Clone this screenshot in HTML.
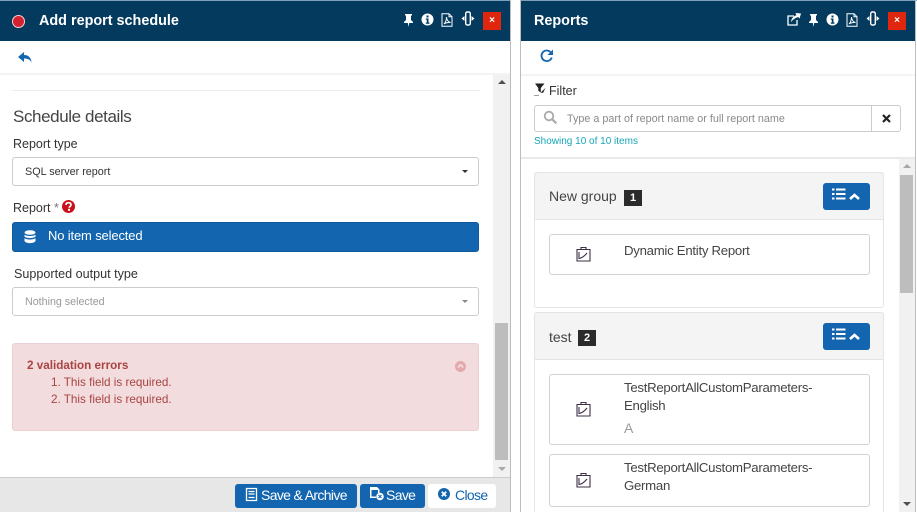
<!DOCTYPE html>
<html><head><meta charset="utf-8">
<style>
html,body{margin:0;padding:0;background:#fff;width:917px;height:512px;overflow:hidden}
#w{position:absolute;left:0;top:0;width:917px;height:512px;overflow:hidden;font-family:"Liberation Sans",sans-serif;color:#333}
.a{position:absolute;box-sizing:border-box;white-space:nowrap}
svg{position:absolute;overflow:visible}
.hd{background:#033a5e;height:40px;top:1px}
.t{font-weight:bold;color:#fff;font-size:14.4px;line-height:20px;top:11px}
.x{background:#e0260c;width:18px;height:18px;top:12px;color:#fff;font-size:10px;font-weight:bold;text-align:center;line-height:17px}
.btn{background:#1265ae;color:#fff;border-radius:3px;height:24px;top:484px;font-size:14px;line-height:22px;letter-spacing:-.65px}
.card{border:1px solid #d2d2d2;border-radius:3px;left:549px;width:321px;background:#fff}
.panel{left:534px;width:350px;border:1px solid #e4e4e4;border-radius:3px;background:#fff}
.ph{left:534px;width:350px;height:47px;background:#f4f4f4;border:1px solid #e4e4e4;border-radius:3px 3px 0 0}
.gb{left:823px;width:47px;height:27px;background:#1265ae;border-radius:3px}
.num{background:#2b2b2b;color:#fff;font-size:11px;font-weight:bold;width:18px;height:16px;line-height:16px;text-align:center}
.rt{font-size:13.2px;letter-spacing:-.27px;line-height:18px;left:624px;color:#444}
</style></head><body><div id="w">
<div class="a" style="left:0;top:0;width:511px;height:1px;background:#7da0b8"></div>
<div class="a" style="left:521px;top:0;width:396px;height:1px;background:#7da0b8"></div>
<div class="a hd" style="left:0;width:510px"></div>
<div class="a hd" style="left:521px;width:394px"></div>
<div class="a" style="left:510px;top:0;width:1px;height:512px;background:#bdbdbd"></div>
<div class="a" style="left:520px;top:0;width:1px;height:512px;background:#bdbdbd"></div>
<div class="a" style="left:915px;top:0;width:1px;height:512px;background:#bdbdbd"></div>

<div class="a" style="left:13px;top:15.5px;width:11px;height:11px;border-radius:50%;background:#d4212f;box-shadow:0 0 0 1px #f4d5d8"></div>
<div class="a t" style="left:39px">Add report schedule</div>

<svg style="left:403px;top:14px" width="11" height="13" viewBox="0 0 11 13"><path d="M2 0h7v1.500H8V6l2 2v1H6.200L5.500 13 4.800 9H1V8l2-2V1.500H2z" fill="#fff"/></svg>
<svg style="left:421px;top:13px" width="13" height="13" viewBox="0 0 13 13"><circle cx="6.500" cy="6.500" r="6" fill="#fff"/><path d="M5.500 2.500h2v2h-2zM4.800 5.500h2.700v4h1v1.200H4.800V9.500h1V6.700h-1z" fill="#033a5e"/></svg>
<svg style="left:441px;top:13px" width="12" height="14" viewBox="0 0 12 14"><path d="M1 .7h7l3 3v9.600H1zM8 .7v3h3M3 11c2-2 2.500-5 2.500-7 .3 3 2 5 4 5.500-2.500-.2-5 .3-6.500 1.500z" fill="none" stroke="#fff" stroke-width="1"/></svg>
<svg style="left:461px;top:11px" width="14" height="15" viewBox="0 0 14 15"><rect x="4.700" y="1" width="4.600" height="13" rx="1.500" fill="none" stroke="#fff" stroke-width="1.400"/><path d="M3.500 5v5L.5 7.500zM10.500 5v5l3-2.500z" fill="#fff"/></svg>
<div class="a x" style="left:483px">×</div>

<div class="a t" style="left:534px">Reports</div>
<svg style="left:787px;top:12px" width="14" height="14" viewBox="0 0 14 14"><path d="M7 4H1v9h9V8" fill="none" stroke="#fff" stroke-width="1.300"/><path d="M4 10c.3-3 2-6 5.500-6.800L8.500 1 14 1.500 12.500 6.500 11 5C8 6 6 7.500 4 10z" fill="#fff"/></svg>
<svg style="left:808px;top:14px" width="11" height="13" viewBox="0 0 11 13"><path d="M2 0h7v1.500H8V6l2 2v1H6.200L5.500 13 4.800 9H1V8l2-2V1.500H2z" fill="#fff"/></svg>
<svg style="left:826px;top:13px" width="13" height="13" viewBox="0 0 13 13"><circle cx="6.500" cy="6.500" r="6" fill="#fff"/><path d="M5.500 2.500h2v2h-2zM4.800 5.500h2.700v4h1v1.200H4.800V9.500h1V6.700h-1z" fill="#033a5e"/></svg>
<svg style="left:846px;top:13px" width="12" height="14" viewBox="0 0 12 14"><path d="M1 .7h7l3 3v9.600H1zM8 .7v3h3M3 11c2-2 2.500-5 2.500-7 .3 3 2 5 4 5.500-2.500-.2-5 .3-6.500 1.500z" fill="none" stroke="#fff" stroke-width="1"/></svg>
<svg style="left:866px;top:11px" width="14" height="15" viewBox="0 0 14 15"><rect x="4.700" y="1" width="4.600" height="13" rx="1.500" fill="none" stroke="#fff" stroke-width="1.400"/><path d="M3.500 5v5L.5 7.500zM10.500 5v5l3-2.500z" fill="#fff"/></svg>
<div class="a x" style="left:888px">×</div>

<!-- left toolbar -->
<div class="a" style="left:0;top:73px;width:510px;height:2px;background:#f4f4f4"></div>
<svg style="left:18px;top:52px" width="14" height="11" viewBox="0 0 14 11"><path d="M6 0v3c4 0 7 2 7.500 7.500C12 7.500 10 6.500 6 6.500V10L0 5z" fill="#1265ae"/></svg>
<div class="a" style="left:12px;top:90px;width:468px;height:1px;background:#ececec"></div>
<div class="a" style="left:13px;top:106px;font-size:17px;letter-spacing:-.4px;line-height:22px;color:#444">Schedule details</div>
<div class="a" style="left:13px;top:135px;font-size:12.5px;line-height:18px;color:#333">Report type</div>
<div class="a" style="left:12px;top:157px;width:467px;height:29px;border:1px solid #ccc;border-radius:3px;font-size:10.8px;line-height:28px;padding-left:12px;color:#333">SQL server report</div>
<div class="a" style="left:462px;top:170px;border:3.500px solid transparent;border-top:3.500px solid #333;border-bottom:0"></div>
<div class="a" style="left:13px;top:199px;font-size:12.5px;line-height:18px;color:#333">Report <span style="color:#777">*</span></div>
<svg style="left:62px;top:200px" width="13" height="13" viewBox="0 0 13 13"><circle cx="6.500" cy="6.500" r="6.500" fill="#c8101a"/><path d="M4 5c0-1.500 1-2.300 2.500-2.300S9 3.500 9 4.800C9 6.300 7.200 6.300 7.200 7.800" fill="none" stroke="#fff" stroke-width="1.700"/><rect x="6" y="8.800" width="2" height="2" fill="#fff"/></svg>
<div class="a" style="left:12px;top:222px;width:467px;height:30px;background:#1265ae;border:1px solid #0f5a9c;border-radius:3px;color:#fff;font-size:13px;letter-spacing:-.15px;line-height:26px;padding-left:35px">No item selected</div>
<svg style="left:24px;top:230px" width="12" height="14" viewBox="0 0 12 14"><ellipse cx="6" cy="2.500" rx="5.500" ry="2.300" fill="#fff"/><path d="M.5 4.500C1.500 6.500 10.500 6.500 11.500 4.500V6.500C10.500 8.500 1.500 8.500.5 6.500zM.5 8C1.500 10 10.500 10 11.500 8V11C10.500 13.800 1.500 13.800.5 11z" fill="#fff"/></svg>
<div class="a" style="left:14px;top:265px;font-size:12.6px;line-height:18px;color:#333">Supported output type</div>
<div class="a" style="left:12px;top:287px;width:467px;height:29px;border:1px solid #ccc;border-radius:3px;font-size:10.7px;line-height:28px;padding-left:12px;color:#999">Nothing selected</div>
<div class="a" style="left:462px;top:300px;border:3.500px solid transparent;border-top:3.500px solid #888;border-bottom:0"></div>

<div class="a" style="left:12px;top:343px;width:467px;height:88px;background:#f2dcde;border:1px solid #ebd0d3;border-radius:3px"></div>
<div class="a" style="left:27px;top:358px;font-size:11.7px;line-height:16px;font-weight:bold;color:#a94442">2 validation errors</div>
<div class="a" style="left:51px;top:374px;font-size:11.7px;line-height:17px;color:#a94442">1. This field is required.<br>2. This field is required.</div>
<svg style="left:455px;top:361px" width="11" height="11" viewBox="0 0 11 11"><circle cx="5.500" cy="5.500" r="5.500" fill="#e5a8ad"/><path d="M2.800 6.500 5.500 3.800 8.200 6.500" fill="none" stroke="#f2dcde" stroke-width="1.600"/></svg>

<!-- left scrollbar -->
<div class="a" style="left:493px;top:75px;width:17px;height:402px;background:#f1f1f1"></div>
<div class="a" style="left:495px;top:323px;width:13px;height:137px;background:#bdbdbd"></div>
<div class="a" style="left:498px;top:80px;border:4px solid transparent;border-bottom:4px solid #505050;border-top:0"></div>
<div class="a" style="left:498px;top:467px;border:4px solid transparent;border-top:4px solid #a8a8a8;border-bottom:0"></div>

<!-- footer -->
<div class="a" style="left:0;top:477px;width:510px;height:35px;background:#e7e7e7;border-top:1px solid #ccc"></div>
<div class="a btn" style="left:235px;width:122px;padding-left:26px">Save &amp; Archive</div>
<svg style="left:245px;top:487px" width="13" height="15" viewBox="0 0 13 15"><path d="M1.500 1.500h10v12h-10zM3.500 4.500h6M3.500 7h6M3.500 10.500h6" fill="none" stroke="#fff" stroke-width="1.300"/></svg>
<div class="a btn" style="left:360px;width:65px;padding-left:26px">Save</div>
<svg style="left:369px;top:486px" width="15" height="15" viewBox="0 0 15 15"><path d="M1 1h7l2.500 2.500V7H9V4H2.500v6.500H7V12H1z" fill="#fff"/><rect x="4" y="1" width="3" height="3" fill="#fff"/><circle cx="11" cy="10.500" r="3.800" fill="#fff"/><path d="M9.500 9l3 3M12.500 9l-3 3" stroke="#1265ae" stroke-width="1"/></svg>
<div class="a btn" style="left:428px;width:68px;background:#fff;color:#1265ae;padding-left:27px">Close</div>
<svg style="left:438px;top:488px" width="12" height="12" viewBox="0 0 12 12"><circle cx="6" cy="6" r="6" fill="#1265ae"/><path d="M3.800 3.800l4.400 4.400M8.200 3.800 3.800 8.200" stroke="#fff" stroke-width="1.800"/></svg>

<!-- right toolbar -->
<svg style="left:540px;top:49px" width="14" height="14" viewBox="0 0 14 14"><path d="M11.800 8.500A5.300 5.300 0 1 1 10.500 3" fill="none" stroke="#1265ae" stroke-width="1.800"/><path d="M13 .5V6H7.500z" fill="#1265ae"/></svg>
<div class="a" style="left:521px;top:74px;width:394px;height:2px;background:#f4f4f4"></div>
<svg style="left:534px;top:83px" width="13" height="13" viewBox="0 0 13 13"><path d="M1 .5h9.500L6.800 5v4.500L4.300 7.800V5z" fill="#222"/><path d="M6.500 9.500l5-4.500-2.500 5z" fill="#333"/><path d="M0 12.500h5" stroke="#777" stroke-width=".7"/></svg>
<div class="a" style="left:549px;top:83px;font-size:12.5px;line-height:17px;color:#333">Filter</div>
<div class="a" style="left:534px;top:105px;width:338px;height:27px;border:1px solid #ccc;border-radius:3px 0 0 3px;font-size:10.8px;line-height:26px;padding-left:32px;color:#8a8a8a">Type a part of report name or full report name</div>
<svg style="left:543px;top:110px" width="15" height="15" viewBox="0 0 15 15"><circle cx="6" cy="6" r="4.300" fill="none" stroke="#aaa" stroke-width="1.800"/><path d="M9.300 9.300l4 4" stroke="#aaa" stroke-width="2.200"/></svg>
<div class="a" style="left:871px;top:105px;width:30px;height:27px;border:1px solid #ccc;border-radius:0 3px 3px 0"></div>
<svg style="left:882px;top:114px" width="9" height="9" viewBox="0 0 9 9"><path d="M1 1l7 7M8 1 1 8" stroke="#222" stroke-width="2.200"/></svg>
<div class="a" style="left:534px;top:134px;font-size:10px;line-height:15px;color:#17a6b8">Showing 10 of 10 items</div>
<div class="a" style="left:521px;top:157px;width:394px;height:2px;background:#e9e9e9"></div>

<!-- right scrollbar -->
<div class="a" style="left:899px;top:159px;width:16px;height:353px;background:#f1f1f1"></div>
<div class="a" style="left:900px;top:175px;width:13px;height:118px;background:#bdbdbd"></div>
<div class="a" style="left:903px;top:164px;border:4px solid transparent;border-bottom:4px solid #a8a8a8;border-top:0"></div>
<div class="a" style="left:903px;top:502px;border:4px solid transparent;border-top:4px solid #505050;border-bottom:0"></div>

<!-- group 1 -->
<div class="a panel" style="top:172px;height:136px"></div>
<div class="a ph" style="top:172px;height:48px"></div>
<div class="a" style="left:549px;top:187px;font-size:14px;line-height:18px;color:#444">New group</div>
<div class="a num" style="left:624px;top:190px">1</div>
<div class="a gb" style="top:183px"></div>
<svg style="left:832px;top:188px" width="29" height="13" viewBox="0 0 29 13"><path d="M0 1.500h2.500M0 6h2.500M0 10.500h2.500M4 1.500h9.500M4 6h9.500M4 10.500h9.500" stroke="#fff" stroke-width="2"/><path d="M18 11l4.500-4L27 11" fill="none" stroke="#fff" stroke-width="2.600"/></svg>
<div class="a card" style="top:234px;height:41px"></div>
<div class="a rt" style="top:242px">Dynamic Entity Report</div>
<svg style="left:576px;top:246px" width="15" height="16" viewBox="0 0 15 16"><path d="M1 3.500h13v11.500H1zM5 3.500V1.500h5v2M3 12.500c3-.5 6-3 8-5.500M3 6v7" fill="none" stroke="#3d2f45" stroke-width="1.100"/></svg>

<!-- group 2 -->
<div class="a panel" style="top:312px;height:210px"></div>
<div class="a ph" style="top:312px;height:48px"></div>
<div class="a" style="left:549px;top:328px;font-size:14px;line-height:18px;color:#444">test</div>
<div class="a num" style="left:578px;top:330px">2</div>
<div class="a gb" style="top:323px"></div>
<svg style="left:832px;top:328px" width="29" height="13" viewBox="0 0 29 13"><path d="M0 1.500h2.500M0 6h2.500M0 10.500h2.500M4 1.500h9.500M4 6h9.500M4 10.500h9.500" stroke="#fff" stroke-width="2"/><path d="M18 11l4.500-4L27 11" fill="none" stroke="#fff" stroke-width="2.600"/></svg>
<div class="a card" style="top:374px;height:71px"></div>
<div class="a rt" style="top:379px">TestReportAllCustomParameters-<br>English</div>
<div class="a" style="left:624px;top:420px;font-size:14px;line-height:17px;color:#999">A</div>
<svg style="left:576px;top:401px" width="15" height="16" viewBox="0 0 15 16"><path d="M1 3.500h13v11.500H1zM5 3.500V1.500h5v2M3 12.500c3-.5 6-3 8-5.500M3 6v7" fill="none" stroke="#3d2f45" stroke-width="1.100"/></svg>
<div class="a card" style="top:454px;height:53px"></div>
<div class="a rt" style="top:459px">TestReportAllCustomParameters-<br>German</div>
<svg style="left:576px;top:472px" width="15" height="16" viewBox="0 0 15 16"><path d="M1 3.500h13v11.500H1zM5 3.500V1.500h5v2M3 12.500c3-.5 6-3 8-5.500M3 6v7" fill="none" stroke="#3d2f45" stroke-width="1.100"/></svg>
</div></body></html>
